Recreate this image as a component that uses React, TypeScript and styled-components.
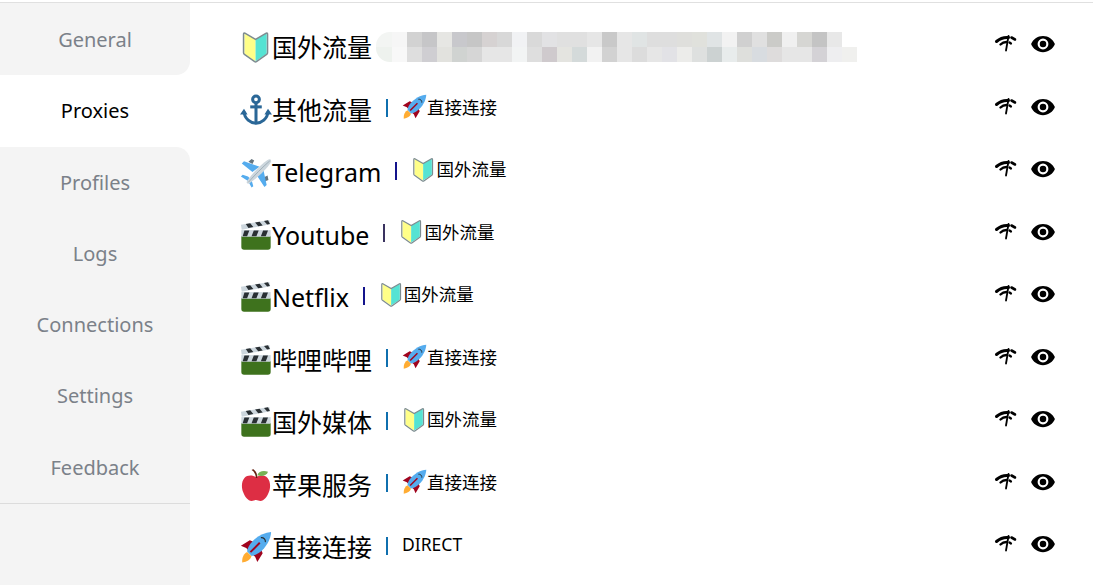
import React from 'react'
import styled, { createGlobalStyle } from 'styled-components'

const GlobalStyle = createGlobalStyle`
  html, body {
    margin: 0;
    padding: 0;
    background: #fff;
    overflow: hidden;
  }
  body {
    font-family: "Noto Sans", "Noto Sans CJK SC", sans-serif;
    color: #000;
  }
`

const Page = styled.div`
  width: 1093px;
  height: 585px;
  padding-top: 2px;
  box-sizing: border-box;
  overflow: hidden;
`

const Frame = styled.div`
  display: flex;
  height: 583px;
  border-top: 1px solid #e0e0e0;
`

const Sidebar = styled.nav`
  flex: 0 0 190px;
  display: flex;
  flex-direction: column;
  background: #fff;
`

const SideItem = styled.div<{ $active?: boolean; $before?: boolean; $after?: boolean }>`
  flex: 0 0 71.25px;
  display: flex;
  align-items: center;
  justify-content: center;
  font-size: 20px;
  color: ${({ $active }) => ($active ? '#000' : '#7b8189')};
  background: ${({ $active }) => ($active ? '#fff' : '#f4f4f4')};
  border-bottom-right-radius: ${({ $before }) => ($before ? '14px' : '0')};
  border-top-right-radius: ${({ $after }) => ($after ? '14px' : '0')};
`

const SideTop = styled.div`
  flex: 0 0 1px;
  background: #f4f4f4;
`

const SideRest = styled.div`
  flex: 1;
  background: #f4f4f4;
  border-top: 1px solid #dcdcdc;
`

const Content = styled.main`
  flex: 1;
  padding: 10px 37px 0 50px;
`

const Row = styled.div`
  height: 62.5px;
  display: flex;
  align-items: center;
`

const Title = styled.div`
  display: flex;
  align-items: center;
  padding-top: 6px;
  font-size: 25px;
  line-height: 32px;
  white-space: nowrap;
`

const Divider = styled.span<{ $color: string }>`
  width: 2px;
  height: 18px;
  margin: 3px 14px 0 14px;
  background: ${({ $color }) => $color};
`

const Current = styled.div`
  display: flex;
  align-items: center;
  font-size: 17.5px;
  line-height: 26px;
  white-space: nowrap;
`

const Actions = styled.div`
  margin-left: auto;
  display: flex;
  align-items: center;
  gap: 12px;
`

const Mosaic = styled.div`
  margin: 6px 0 0 4px;
  display: flex;
  flex-direction: column;
  width: 481px;
  border-radius: 14px 0 0 14px;
  overflow: hidden;
`

const MosaicRow = styled.div`
  display: flex;
  height: 15px;
`

const MosaicCell = styled.span<{ $color: string }>`
  flex: 0 0 15px;
  background: ${({ $color }) => $color};
  &:first-child {
    flex-basis: 16px;
  }
`

const Glyph = styled.svg<{ $size: number }>`
  flex: 0 0 auto;
  display: block;
  width: ${({ $size }) => $size}px;
  height: ${({ $size }) => $size}px;
`

const IconSvg = styled.svg<{ $size: number }>`
  display: block;
  width: ${({ $size }) => $size}px;
  height: ${({ $size }) => $size}px;
`

type EmojiName = 'shield' | 'anchor' | 'plane' | 'clapper' | 'apple' | 'rocket'

const emojiParts: Record<EmojiName, React.ReactNode> = {
  shield: (
    <>
      <path d="M5 2.5 17.5 9.5V34L5 25.5Z" fill="#ffff88" />
      <path d="M30 2.5 17.5 9.5V34L30 25.5Z" fill="#55e3d3" />
      <path
        d="M5.5 2.5 17.5 9.5 29.5 2.5C30.5 2 31 2.5 31 3.5V24.5C31 25.5 30.5 26 30 26.4L18.5 34.5C17.8 35 17.2 35 16.5 34.5L5 26.4C4.5 26 4 25.5 4 24.5V3.5C4 2.5 4.5 2 5.5 2.5Z"
        fill="none"
        stroke="#7d8c90"
        strokeWidth="1.7"
      />
    </>
  ),
  anchor: (
    <g fill="none" stroke="#2a6797" strokeWidth="3.4">
      <circle cx="18" cy="6" r="3.8" />
      <path d="M18 9.5V33" />
      <path d="M11.5 14.5H24.5" />
      <path d="M4.5 20C5 28 12 32.5 18 33 24 32.5 31 28 31.5 20" />
      <path d="M0 23 4.5 16.5 8.5 23ZM27.5 23 31.5 16.5 36 23Z" fill="#2a6797" stroke="none" />
    </g>
  ),
  plane: (
    <>
      <path d="M9.5 6.5 13 3.5 16 5 14 9ZM27 29 32 27 31 22 27 24Z" fill="#66757f" />
      <path d="M2 8.5 4.5 6 22 12 14 18ZM19 22 26 14 30 32.5 27.5 35Z" fill="#55acee" />
      <path d="M1 23 3 21 9 23 13 27 15 34 13 35.5 9 28Z" fill="#55acee" />
      <path d="M8 28C14 19 24 9 31 4.5 33.5 3 35.5 4 35 6.5 31 14 20 24 11 30.5 8.5 32 6.5 30.5 8 28Z" fill="#ccd6dd" />
      <path d="M9.5 29.5C16 22 25 13 33.5 5.5" fill="none" stroke="#99aab5" strokeWidth="1" />
    </>
  ),
  clapper: (
    <>
      <path d="M1.5 19H34.5V31.5C34.5 33.4 33.4 34.5 31.5 34.5H4.5C2.6 34.5 1.5 33.4 1.5 31.5Z" fill="#3e721d" />
      <path d="M1.5 12.5H34.5V20H1.5Z" fill="#ccd6dd" />
      <path d="M5 13H10.5L8 19.5H3ZM15.5 13H21L18.5 19.5H13ZM26 13H31.5L29 19.5H23.5Z" fill="#292f33" />
      <path d="M1 6.5 33 1 34 6 2 12Z" fill="#ccd6dd" />
      <path d="M6.5 5.5 11.5 4.7 15 9 9.5 10ZM17 3.8 22 3 25.5 7.2 20.5 8.1ZM27 2.2 31.5 1.4 33.7 5.5 30.5 6.1Z" fill="#292f33" />
    </>
  ),
  apple: (
    <>
      <path d="M18 9C14 6.5 8 6.5 5 10 1.5 14 1.5 21 3.5 26 5.5 31.5 9 36 13 36 15 36 16 35 18 35 20 35 21 36 23 36 27 36 30.5 31.5 32.5 26 34.5 21 34.5 14 31 10 28 6.5 22 6.5 18 9Z" fill="#dd2e44" />
      <path d="M18 10C17.5 6 16 2.5 13 1 14.5 0 15.5 0 16 1 18.5 3 19.5 6 19.5 10Z" fill="#662113" />
      <path d="M19.5 7C21 2.5 26 1.5 31.5 3 30.5 7 25 9 19.5 7Z" fill="#77b255" />
    </>
  ),
  rocket: (
    <>
      <path d="M2.5 35.5C2 30 4 25.5 8 23.5L13 28.5C11.5 32.5 8 35 2.5 35.5Z" fill="#ffac33" />
      <path d="M1 16.5 11 10.5 17 13 9.5 22 7 19ZM19.5 35 25.5 25 23 19 14 26.5 17 29Z" fill="#a0041e" />
      <path d="M35 1C27 1.5 18 6 11.5 14.5 9.5 17.5 8 20.5 8 23L13 28C15.5 28 18.5 26.5 21.5 24.5 30 18 34.5 9 35 1Z" fill="#55acee" />
      <path d="M12.5 24.5 23 14 21.5 12.5 11 23Z" fill="#a0041e" />
      <path d="M23.5 7.5C26.5 7 29 9.5 28.5 12.5" fill="none" stroke="#292f33" strokeWidth="1.3" />
    </>
  ),
}

const Emoji = ({ name, size }: { name: EmojiName; size: number }) => (
  <Glyph $size={size} viewBox="0 0 36 36">
    {emojiParts[name]}
  </Glyph>
)

const LatencyIcon = () => (
  <IconSvg $size={24} viewBox="0 0 24 24">
    <g fill="none" stroke="#000" strokeLinecap="round">
      <path d="M2.5 9.5C6 6.5 10 5 14.5 5.5" strokeWidth="3" />
      <path d="M17.5 5.5 21 7.5" strokeWidth="2.6" />
      <path d="M6.5 12.5C8 11 10 10 12.5 10" strokeWidth="2.4" />
      <path d="M15.5 10.5 17 11.5" strokeWidth="2.2" />
      <path d="M14.5 4 12 18.5" strokeWidth="1.8" />
    </g>
  </IconSvg>
)

const EyeIcon = () => (
  <IconSvg $size={26} viewBox="0 0 24 24">
    <path
      fillRule="evenodd"
      d="M12 4.5C7 4.5 2.7 7.6 1 12c1.7 4.4 6 7.5 11 7.5s9.3-3.1 11-7.5c-1.7-4.4-6-7.5-11-7.5ZM12 17a5 5 0 1 1 0-10 5 5 0 0 1 0 10Zm0-8a3 3 0 1 0 0 6 3 3 0 0 0 0-6Z"
      fill="#000"
    />
  </IconSvg>
)

const navItems = ['General', 'Proxies', 'Profiles', 'Logs', 'Connections', 'Settings', 'Feedback']
const activeNav = 1

const mosaicTop = [
  '#f3f5f3', '#f6f6f6', '#d2d2d2', '#c6c6c8', '#e6e6e3', '#c8c8cc', '#c6c6c6', '#d6d2d2',
  '#d8d8d8', '#f1f2f4', '#d9d9d9', '#e2e2e4', '#e0e0e0', '#e0e0e0', '#e6e6e6', '#c9c9c9',
  '#e6e6e6', '#e0e4e4', '#dedede', '#dedede', '#dfdfdc', '#e0e1dc', '#e0e4e5', '#f2f2f2',
  '#d0d0d0', '#e0e0e0', '#cbcbc8', '#f0f0f0', '#d6d6d3', '#c4c4c4', '#e8e8e8',
]

const mosaicBottom = [
  '#eef2ee', '#f8f8f8', '#dedede', '#cfced2', '#e2e2de', '#d0d3d1', '#d6d6d6', '#e6e6e6',
  '#e6e6e6', '#f2f4f4', '#dedede', '#cfcacd', '#e4e4e0', '#d4dada', '#f2f2f2', '#d2d2d2',
  '#e6e6e6', '#dcdcdc', '#e6e6e6', '#e2e2e6', '#ececea', '#dee0df', '#ccd2d2', '#e8ecec',
  '#dedfdc', '#d8dce0', '#dedcdc', '#e6e6e6', '#e6e6e6', '#d4d2d6', '#eeeef0', '#f0f0ee',
]

type Proxy = {
  emoji: EmojiName
  name: string
  barColor?: string
  nowEmoji?: EmojiName
  now?: string
}

const proxies: Proxy[] = [
  { emoji: 'shield', name: '国外流量' },
  { emoji: 'anchor', name: '其他流量', barColor: '#0f6fae', nowEmoji: 'rocket', now: '直接连接' },
  { emoji: 'plane', name: 'Telegram', barColor: '#14148c', nowEmoji: 'shield', now: '国外流量' },
  { emoji: 'clapper', name: 'Youtube', barColor: '#3a3360', nowEmoji: 'shield', now: '国外流量' },
  { emoji: 'clapper', name: 'Netflix', barColor: '#14148c', nowEmoji: 'shield', now: '国外流量' },
  { emoji: 'clapper', name: '哔哩哔哩', barColor: '#0f6fae', nowEmoji: 'rocket', now: '直接连接' },
  { emoji: 'clapper', name: '国外媒体', barColor: '#0f6fae', nowEmoji: 'shield', now: '国外流量' },
  { emoji: 'apple', name: '苹果服务', barColor: '#0f6fae', nowEmoji: 'rocket', now: '直接连接' },
  { emoji: 'rocket', name: '直接连接', barColor: '#0f6fae', now: 'DIRECT' },
]

const App = () => {
  return (
    <Page>
      <GlobalStyle />
      <Frame>
        <Sidebar>
          <SideTop />
          {navItems.map((item, i) => (
            <SideItem
              key={item}
              $active={i === activeNav}
              $before={i === activeNav - 1}
              $after={i === activeNav + 1}
            >
              {item}
            </SideItem>
          ))}
          <SideRest />
        </Sidebar>
        <Content>
          {proxies.map((p) => (
            <Row key={p.name}>
              <Title>
                <Emoji name={p.emoji} size={32} />
                {p.name}
              </Title>
              {p.now ? (
                <>
                  <Divider $color={p.barColor ?? '#000'} />
                  <Current>
                    {p.nowEmoji && <Emoji name={p.nowEmoji} size={25} />}
                    {p.now}
                  </Current>
                </>
              ) : (
                <Mosaic>
                  <MosaicRow>
                    {mosaicTop.map((c, i) => (
                      <MosaicCell key={i} $color={c} />
                    ))}
                  </MosaicRow>
                  <MosaicRow>
                    {mosaicBottom.map((c, i) => (
                      <MosaicCell key={i} $color={c} />
                    ))}
                  </MosaicRow>
                </Mosaic>
              )}
              <Actions>
                <LatencyIcon />
                <EyeIcon />
              </Actions>
            </Row>
          ))}
        </Content>
      </Frame>
    </Page>
  )
}

export default App
